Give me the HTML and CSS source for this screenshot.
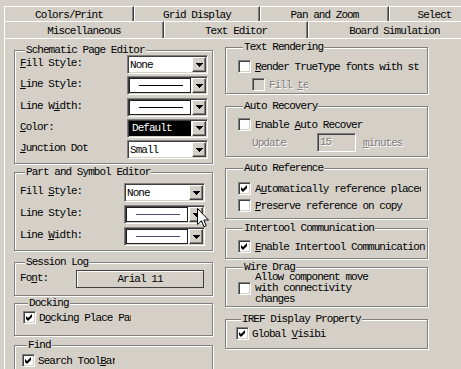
FILE: index.html
```html
<!DOCTYPE html>
<html lang="en">
<head>
    <meta charset="UTF-8">
    <title>Options</title>
    <link rel="stylesheet" href="styles.css">
</head>
<body>

    <!-- Tab strip, two rows -->
    <div class="tab-row back">
        <div class="tab t1">Colors/Print</div>
        <div class="tab t2">Grid Display</div>
        <div class="tab t3">Pan and Zoom</div>
        <div class="tab t4">Select</div>
    </div>
    <div class="tab-row front">
        <div class="tab f1 active">Miscellaneous</div>
        <div class="tab f2">Text Editor</div>
        <div class="tab f3">Board Simulation</div>
    </div>

    <div class="panel">
        <!-- Left column -->
        <div class="col">
            <fieldset class="group g-schematic">
                <legend>Schematic Page Editor</legend>
                <div class="row">
                    <span class="label"><u>F</u>ill Style:</span>
                    <div class="combo"><div class="field">None</div><div class="btn"><svg width="7" height="4" viewBox="0 0 7 4"><path d="M0 0h7v1h-1v1h-1v1h-1v1h-1v-1h-1v-1h-1v-1h-1z"/></svg></div></div>
                </div>
                <div class="row">
                    <span class="label"><u>L</u>ine Style:</span>
                    <div class="combo"><div class="field framed"><span class="stroke"></span></div><div class="btn"><svg width="7" height="4" viewBox="0 0 7 4"><path d="M0 0h7v1h-1v1h-1v1h-1v1h-1v-1h-1v-1h-1v-1h-1z"/></svg></div></div>
                </div>
                <div class="row">
                    <span class="label">Line W<u>i</u>dth:</span>
                    <div class="combo"><div class="field framed"><span class="stroke"></span></div><div class="btn"><svg width="7" height="4" viewBox="0 0 7 4"><path d="M0 0h7v1h-1v1h-1v1h-1v1h-1v-1h-1v-1h-1v-1h-1z"/></svg></div></div>
                </div>
                <div class="row">
                    <span class="label"><u>C</u>olor:</span>
                    <div class="combo"><div class="field dark">Default</div><div class="btn"><svg width="7" height="4" viewBox="0 0 7 4"><path d="M0 0h7v1h-1v1h-1v1h-1v1h-1v-1h-1v-1h-1v-1h-1z"/></svg></div></div>
                </div>
                <div class="row">
                    <span class="label"><u>J</u>unction Dot</span>
                    <div class="combo"><div class="field">Small</div><div class="btn"><svg width="7" height="4" viewBox="0 0 7 4"><path d="M0 0h7v1h-1v1h-1v1h-1v1h-1v-1h-1v-1h-1v-1h-1z"/></svg></div></div>
                </div>
            </fieldset>

            <fieldset class="group g-part">
                <legend>Part and Symbol Editor</legend>
                <div class="row">
                    <span class="label">Fill <u>S</u>tyle:</span>
                    <div class="combo"><div class="field">None</div><div class="btn"><svg width="7" height="4" viewBox="0 0 7 4"><path d="M0 0h7v1h-1v1h-1v1h-1v1h-1v-1h-1v-1h-1v-1h-1z"/></svg></div></div>
                </div>
                <div class="row">
                    <span class="label">Line Style:</span>
                    <div class="combo"><div class="field framed"><span class="stroke soft"></span></div><div class="btn"><svg width="7" height="4" viewBox="0 0 7 4"><path d="M0 0h7v1h-1v1h-1v1h-1v1h-1v-1h-1v-1h-1v-1h-1z"/></svg></div>
                        <svg class="cursor" width="12" height="20" viewBox="0 0 12 20"><path d="M0.5 0.5V16.5L4.5 12.8L7 18.8L9.2 17.8L6.8 12H11.5Z" fill="#fff" stroke="#000"/></svg>
                    </div>
                </div>
                <div class="row">
                    <span class="label">Line <u>W</u>idth:</span>
                    <div class="combo"><div class="field framed"><span class="stroke soft"></span></div><div class="btn"><svg width="7" height="4" viewBox="0 0 7 4"><path d="M0 0h7v1h-1v1h-1v1h-1v1h-1v-1h-1v-1h-1v-1h-1z"/></svg></div></div>
                </div>
            </fieldset>

            <fieldset class="group g-session">
                <legend>Session Log</legend>
                <div class="row">
                    <span class="label short">Fo<u>n</u>t:</span>
                    <div class="font-box">Arial 11</div>
                </div>
            </fieldset>

            <fieldset class="group g-docking">
                <legend>Docking</legend>
                <div class="check">
                    <span class="cb"><svg width="7" height="7" viewBox="0 0 7 7"><path d="M0 2L2 4L6 0V3L2 7L0 5Z"/></svg></span>
                    <span class="clip w-dock">D<u>o</u>cking Place Panels</span>
                </div>
            </fieldset>

            <fieldset class="group g-find">
                <legend>Find</legend>
                <div class="check">
                    <span class="cb"><svg width="7" height="7" viewBox="0 0 7 7"><path d="M0 2L2 4L6 0V3L2 7L0 5Z"/></svg></span>
                    <span class="clip w-find">Search Tool<u>B</u>ar</span>
                </div>
            </fieldset>
        </div>

        <!-- Right column -->
        <div class="col">
            <fieldset class="group r-text">
                <legend>Text Rendering</legend>
                <div class="check">
                    <span class="cb"></span>
                    <span class="clip w-render"><u>R</u>ender TrueType fonts with stroke</span>
                </div>
                <div class="check sub disabled">
                    <span class="cb"></span>
                    <span class="clip w-fill">Fill <u>t</u>ext</span>
                </div>
            </fieldset>

            <fieldset class="group r-recovery">
                <legend>Auto Recovery</legend>
                <div class="check">
                    <span class="cb"></span>
                    <span>Enable <u>A</u>uto Recover</span>
                </div>
                <div class="update disabled">
                    <span>Update</span>
                    <span class="num">15</span>
                    <span><u>m</u>inutes</span>
                </div>
            </fieldset>

            <fieldset class="group r-reference">
                <legend>Auto Reference</legend>
                <div class="check">
                    <span class="cb"><svg width="7" height="7" viewBox="0 0 7 7"><path d="M0 2L2 4L6 0V3L2 7L0 5Z"/></svg></span>
                    <span class="clip w-auto">A<u>u</u>tomatically reference placed parts</span>
                </div>
                <div class="check">
                    <span class="cb"></span>
                    <span><u>P</u>reserve reference on copy</span>
                </div>
            </fieldset>

            <fieldset class="group r-intertool">
                <legend>Intertool Communication</legend>
                <div class="check">
                    <span class="cb"><svg width="7" height="7" viewBox="0 0 7 7"><path d="M0 2L2 4L6 0V3L2 7L0 5Z"/></svg></span>
                    <span><u>E</u>nable Intertool Communication</span>
                </div>
            </fieldset>

            <fieldset class="group r-wire">
                <legend>Wire Drag</legend>
                <div class="check multi">
                    <span class="cb"></span>
                    <span>Allow component move<br>with connectivity<br>changes</span>
                </div>
            </fieldset>

            <fieldset class="group r-iref">
                <legend>IREF Display Property</legend>
                <div class="check tight">
                    <span class="cb"><svg width="7" height="7" viewBox="0 0 7 7"><path d="M0 2L2 4L6 0V3L2 7L0 5Z"/></svg></span>
                    <span class="clip w-global">Global <u>V</u>isibility</span>
                </div>
            </fieldset>
        </div>
    </div>

</body>
</html>
```

FILE: styles.css
```css
* {
    box-sizing: border-box;
}

body {
    margin: 0;
    width: 461px;
    height: 369px;
    overflow: hidden;
    background-color: #d4d0c8;
    color: #000;
    font-family: "Liberation Mono", monospace;
    font-size: 11px;
    letter-spacing: -0.95px;
}

u {
    text-decoration: underline;
    text-underline-offset: 1px;
}

/* Tabs */
.tab-row {
    display: flex;
    padding-left: 4px;
    overflow: hidden;
    white-space: nowrap;
}

.tab-row.back {
    margin-top: 6px;
    height: 15px;
}

.tab-row.front {
    height: 17px;
}

.tab {
    flex-shrink: 0;
    text-align: center;
    border-top: 1px solid #fff;
    border-left: 1px solid #fff;
    border-right: 1px solid #404040;
    box-shadow: inset -1px 0 0 #808080;
    line-height: 14px;
}

.back .tab {
    padding-top: 2px;
    line-height: 12px;
}

.front .tab {
    padding-top: 2px;
}

.t1 { width: 130px; }
.t2 { width: 126px; }
.t3 { width: 129px; }
.t4 { width: 91px; }
.f1 { width: 160px; }
.f2 { width: 144px; }
.f3 { width: 173px; }

/* Page body */
.panel {
    display: grid;
    grid-template-columns: 199px 203px;
    column-gap: 12px;
    margin-left: 4px;
    padding-left: 9px;
    height: 331px;
    border-top: 1px solid #fff;
    border-left: 1px solid #fff;
}

.col {
    display: flex;
    flex-direction: column;
}

.group {
    margin: 0;
    padding: 0;
    min-width: 0;
    border: 1px solid #808080;
    box-shadow: inset 1px 1px 0 #fff, 1px 1px 0 #fff;
}

.group legend {
    margin-left: 5px;
    padding: 0 1px;
    line-height: 10px;
    background-color: #d4d0c8;
}

.row {
    display: flex;
    align-items: center;
    position: relative;
}

.label {
    flex-shrink: 0;
    padding-bottom: 3px;
    white-space: nowrap;
}

/* combo box */
.combo {
    position: relative;
    display: flex;
    width: 81px;
    height: 19px;
    padding: 1px;
    background-color: #fff;
    border: 1px solid;
    border-color: #808080 #fff #fff #808080;
    box-shadow: inset 1px 1px 0 #404040, inset -1px -1px 0 #d4d0c8;
}

.field {
    flex: 1;
    padding-left: 1px;
    line-height: 14px;
    white-space: nowrap;
    display: flex;
    align-items: center;
}

.field.framed {
    justify-content: center;
    box-shadow: inset 0 0 0 1px #202020;
    margin-right: 1px;
}

.field.dark {
    background-color: #000;
    color: #fff;
    padding-left: 3px;
    margin-right: 1px;
}

.stroke {
    display: block;
    width: 44px;
    height: 1px;
    background-color: #000;
}

.stroke.soft {
    background-color: #4c4c74;
}

.btn {
    width: 14px;
    display: flex;
    align-items: center;
    justify-content: center;
    background-color: #d4d0c8;
    border: 1px solid;
    border-color: #fff #404040 #404040 #fff;
    box-shadow: inset -1px -1px 0 #808080;
}

.cursor {
    position: absolute;
    left: 72px;
    top: 2px;
}

/* Schematic Page Editor */
.g-schematic {
    margin-top: 6px;
    height: 119px;
    padding: 0 4px 0 5px;
    display: flex;
    flex-direction: column;
    gap: 2.3px;
}

.g-schematic .label {
    width: 107px;
}

/* Part and Symbol Editor */
.g-part {
    margin-top: 3px;
    height: 84px;
    padding: 6px 4px 0 5px;
    display: flex;
    flex-direction: column;
    gap: 3px;
}

.g-part .label {
    width: 104px;
}

/* Session Log */
.g-session {
    margin-top: 6px;
    height: 39px;
    padding: 3px 0 0 5px;
}

.g-session .label {
    width: 56px;
}

.font-box {
    width: 128px;
    height: 18px;
    line-height: 16px;
    text-align: center;
    border: 1px solid #404040;
    box-shadow: inset 1px 1px 0 #fff;
}

.g-docking {
    margin-top: 2px;
    height: 38px;
    padding: 3px 0 0 8px;
}

.g-find {
    margin-top: 4px;
    height: 40px;
    padding: 4px 0 0 7px;
}

/* checkbox rows */
.check {
    display: flex;
    align-items: center;
    gap: 3px;
    white-space: nowrap;
}

.cb {
    flex-shrink: 0;
    width: 13px;
    height: 13px;
    display: flex;
    align-items: center;
    justify-content: center;
    background-color: #fff;
    border: 1px solid;
    border-color: #808080 #fff #fff #808080;
    box-shadow: inset 1px 1px 0 #404040, inset -1px -1px 0 #d4d0c8;
}

.clip {
    overflow: hidden;
}

.w-dock { width: 92px; }
.w-find { width: 77px; }
.w-render { width: 165px; }
.w-fill { width: 39px; }
.w-auto { width: 166px; }
.w-global { width: 75px; }

.disabled {
    color: #808080;
    text-shadow: 1px 1px 0 #fff;
}

.disabled .cb {
    background-color: #d4d0c8;
}

/* Right column groups */
.r-text {
    margin-top: 3px;
    height: 52px;
    padding: 8px 0 0 12px;
    display: flex;
    flex-direction: column;
    gap: 5px;
}

.r-text .check {
    gap: 4px;
}

.check.sub {
    padding-left: 14px;
}

.r-recovery {
    margin-top: 7px;
    height: 56px;
    padding: 7px 0 0 12px;
}

.r-recovery .check {
    gap: 4px;
}

.update {
    display: flex;
    align-items: center;
    margin-top: 2px;
    padding-left: 14px;
}

.num {
    width: 39px;
    height: 19px;
    margin: 0 7px 0 31px;
    padding-left: 2px;
    line-height: 16px;
    border: 1px solid;
    border-color: #808080 #fff #fff #808080;
    box-shadow: inset 1px 1px 0 #404040, inset -1px -1px 0 #d4d0c8;
}

.r-reference {
    margin-top: 6px;
    height: 56px;
    padding: 9px 0 0 12px;
    display: flex;
    flex-direction: column;
    gap: 4px;
}

.r-reference .check,
.r-intertool .check,
.r-wire .check {
    gap: 4px;
}

.r-intertool {
    margin-top: 4px;
    height: 36px;
    padding: 7px 0 0 12px;
}

.r-wire {
    margin-top: 3px;
    height: 45px;
    padding: 0 0 0 12px;
}

.check.multi {
    margin-top: 0;
    line-height: 11.2px;
}

.r-iref {
    margin-top: 7px;
    height: 35px;
    padding: 3px 0 0 10px;
}
```
